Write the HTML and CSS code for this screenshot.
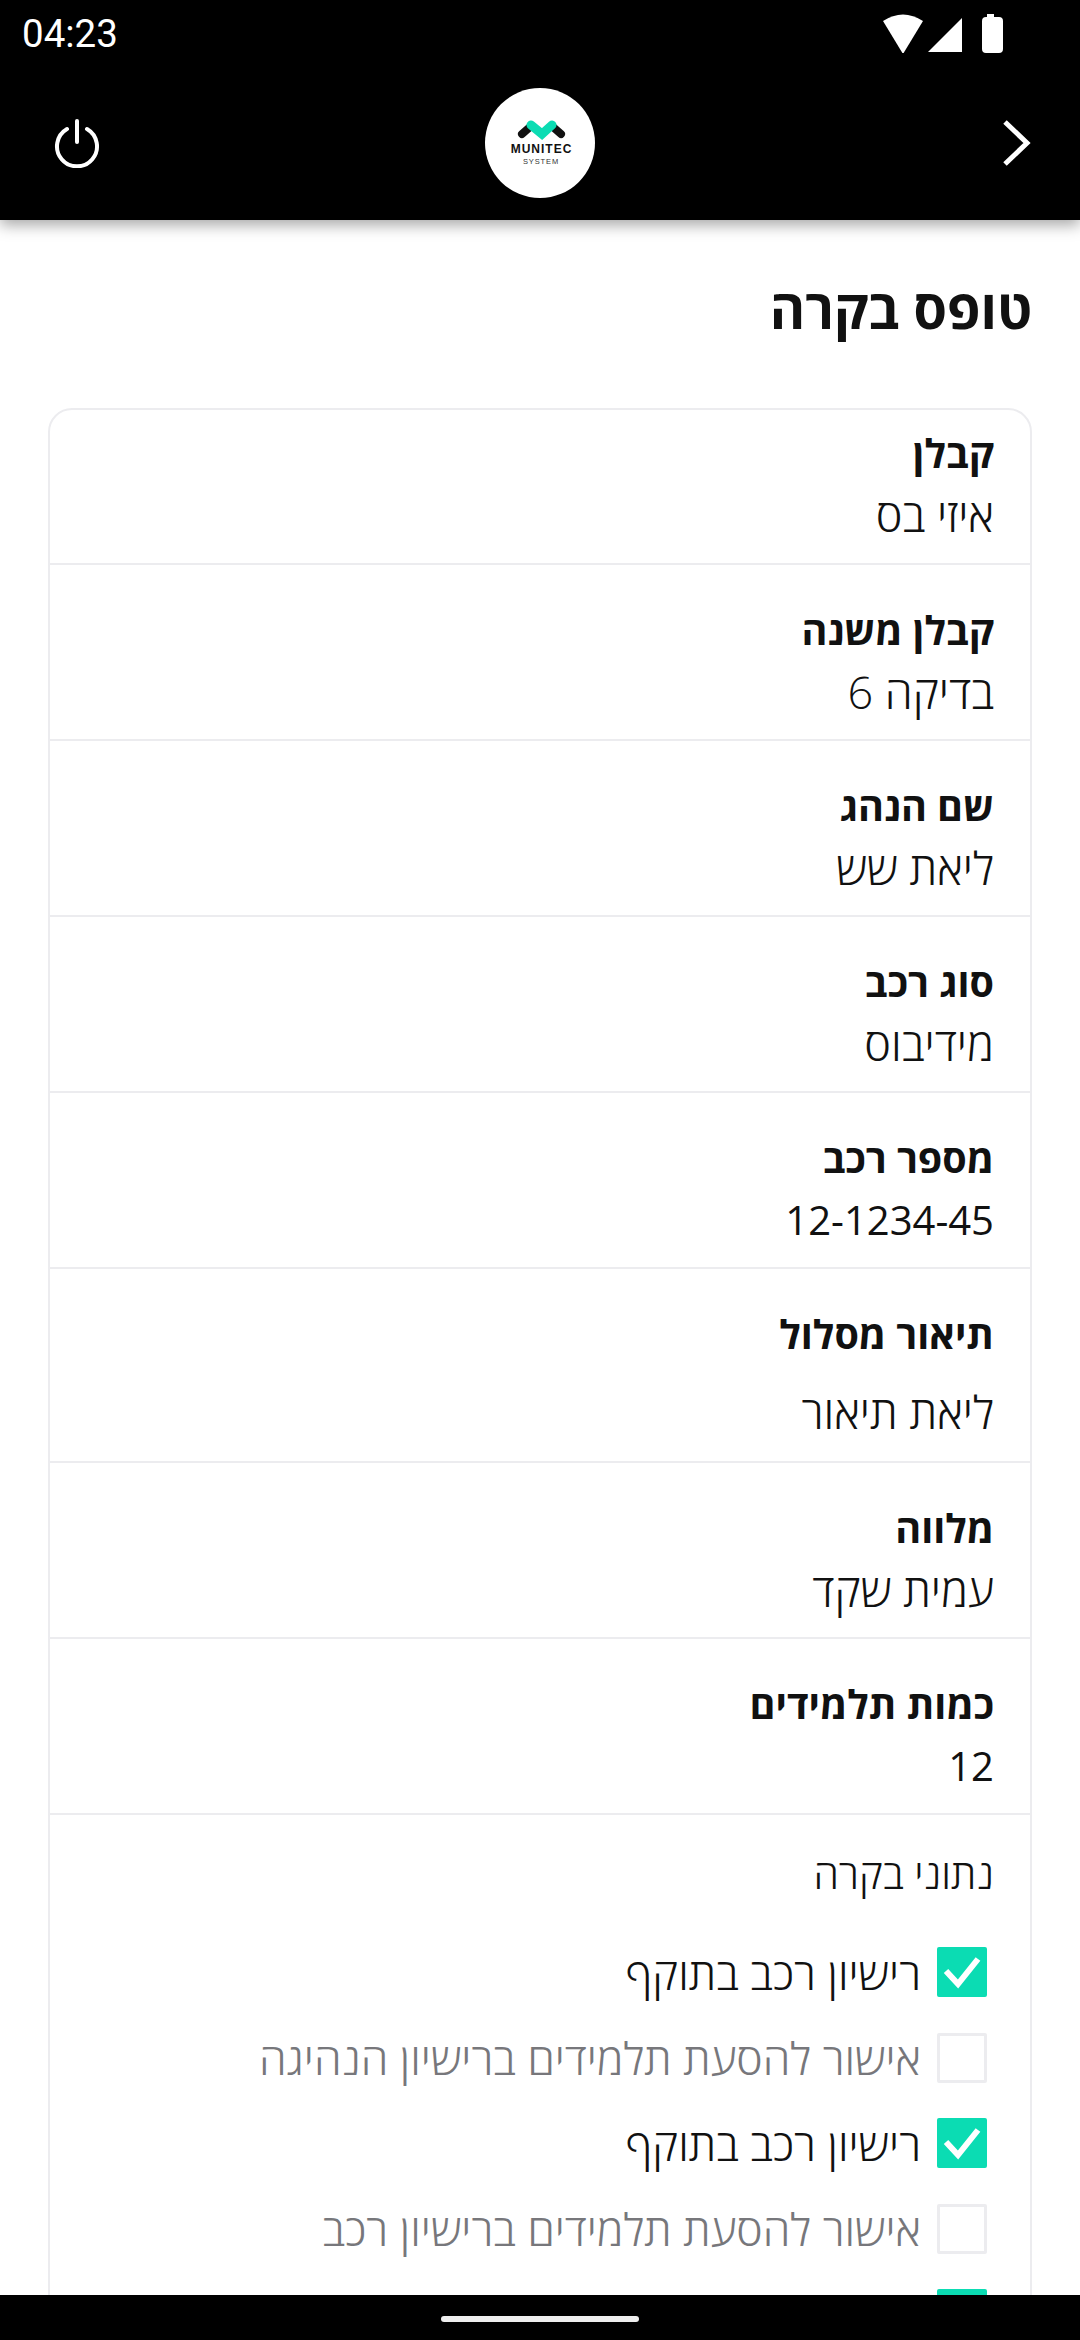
FILE: index.html
```html
<!DOCTYPE html>
<html lang="he" dir="rtl">
<head>
  <meta charset="UTF-8" />
  <meta name="viewport" content="width=device-width, initial-scale=1.0" />
  <title>טופס בקרה</title>
  <link rel="stylesheet" href="styles.css">
</head>
<body>
  <header class="top">
    <div class="status" dir="ltr">
      <span class="time">04:23</span>
      <svg class="status-icons" width="125" height="40" viewBox="0 0 125 40">
        <path d="M5 8 Q25 -5 45 8 L25 41 Z" fill="#fff"/>
        <path d="M50 39 L84 5 V39 Z" fill="#fff"/>
        <path d="M109 4 V1 H116 V4 H121 Q125 4 125 8 V36 Q125 40 121 40 H108 Q104 40 104 36 V8 Q104 4 108 4 Z" fill="#fff"/>
      </svg>
    </div>
    <div class="toolbar" dir="ltr">
      <div class="side side-start">
        <svg width="50" height="50" viewBox="0 0 50 50" fill="none" stroke="#fff" stroke-width="4" stroke-linecap="round">
          <path d="M15 11 A20 20 0 1 0 35 11"/>
          <path d="M25 3 V24"/>
        </svg>
      </div>
      <svg class="logo" width="110" height="110" viewBox="0 0 110 110">
        <circle cx="55" cy="55" r="55" fill="#fff"/>
        <path d="M37 46 L45 39" stroke="#111" stroke-width="8" stroke-linecap="round"/>
        <path d="M76 46 L68 39" stroke="#111" stroke-width="8" stroke-linecap="round"/>
        <path d="M46 37 L57 46 L67 37" fill="none" stroke="#0bdcb3" stroke-width="9" stroke-linecap="round" stroke-linejoin="miter"/>
        <text class="logo-name" x="56.5" y="65" text-anchor="middle">MUNITEC</text>
        <text class="logo-sub" x="56" y="76" text-anchor="middle">SYSTEM</text>
      </svg>
      <div class="side side-end">
        <svg width="30" height="48" viewBox="0 0 30 48" fill="none" stroke="#fff" stroke-width="5">
          <path d="M3 3 L25 24 L3 45" stroke-linejoin="miter"/>
        </svg>
      </div>
    </div>
  </header>

  <main class="content">
    <h1>טופס בקרה</h1>
    <section class="card">
      <div class="row">
        <div class="label">קבלן</div>
        <div class="value">איזי בס</div>
      </div>
      <div class="row">
        <div class="label">קבלן משנה</div>
        <div class="value">בדיקה 6</div>
      </div>
      <div class="row">
        <div class="label">שם הנהג</div>
        <div class="value">ליאת שש</div>
      </div>
      <div class="row">
        <div class="label">סוג רכב</div>
        <div class="value">מידיבוס</div>
      </div>
      <div class="row">
        <div class="label">מספר רכב</div>
        <div class="value value-num">12-1234-45</div>
      </div>
      <div class="row row-tall">
        <div class="label">תיאור מסלול</div>
        <div class="value">ליאת תיאור</div>
      </div>
      <div class="row">
        <div class="label">מלווה</div>
        <div class="value">עמית שקד</div>
      </div>
      <div class="row">
        <div class="label">כמות תלמידים</div>
        <div class="value value-num">12</div>
      </div>
      <div class="checks">
        <div class="checks-title">נתוני בקרה</div>
        <div class="check on">
          <span class="box"><svg width="38" height="34" viewBox="0 0 38 34" fill="none" stroke="#fff" stroke-width="6"><path d="M3 16 L15 29 L35 4"/></svg></span>
          <span>רישיון רכב בתוקף</span>
        </div>
        <div class="check">
          <span class="box"></span>
          <span>אישור להסעת תלמידים ברישיון הנהיגה</span>
        </div>
        <div class="check on">
          <span class="box"><svg width="38" height="34" viewBox="0 0 38 34" fill="none" stroke="#fff" stroke-width="6"><path d="M3 16 L15 29 L35 4"/></svg></span>
          <span>רישיון רכב בתוקף</span>
        </div>
        <div class="check">
          <span class="box"></span>
          <span>אישור להסעת תלמידים ברישיון רכב</span>
        </div>
        <div class="check on">
          <span class="box"></span>
          <span></span>
        </div>
      </div>
    </section>
  </main>

  <footer class="navbar"><span class="handle"></span></footer>
</body>
</html>
```

FILE: styles.css
```css
* { box-sizing: border-box; }

html, body {
  margin: 0;
  height: 2340px;
  overflow: hidden;
}

body {
  display: flex;
  flex-direction: column;
  background: #fff;
  color: #111;
  font-family: "Open Sans", "Liberation Sans", sans-serif;
}

.top {
  height: 220px;
  flex: none;
  background: #000;
  box-shadow: 0 5px 14px rgba(0, 0, 0, 0.35);
  position: relative;
  z-index: 1;
}

.status {
  height: 66px;
  padding: 0 77px 0 22px;
  display: flex;
  align-items: center;
  justify-content: space-between;
}

.time {
  color: #fff;
  font-family: Roboto, sans-serif;
  font-size: 38.5px;
}

.status-icons { margin-top: -1px; }

.toolbar {
  height: 154px;
  padding: 0 48px;
  display: flex;
  align-items: center;
}

.side {
  flex: 1;
  display: flex;
}

.side-start svg { margin-left: 4px; }
.side-end { justify-content: flex-end; }

.logo-name {
  font-family: "Liberation Sans", sans-serif;
  font-size: 12px;
  font-weight: 700;
  letter-spacing: 1px;
  fill: #111;
}

.logo-sub {
  font-family: "Liberation Sans", sans-serif;
  font-size: 7.5px;
  letter-spacing: 0.9px;
  fill: #333;
}

.content {
  flex: 1;
  min-height: 0;
  overflow: hidden;
  padding: 0 48px;
}

h1 {
  margin: 59px 0 71px;
  font-size: 54px;
  line-height: 58px;
  font-weight: 700;
}

.card {
  border: 2px solid #ececef;
  border-radius: 24px;
}

.row {
  height: 176px;
  padding: 34px 36px 0;
  border-bottom: 2px solid #ececef;
}

.row:first-child {
  height: 155px;
  padding-top: 12px;
}

.row-tall { height: 194px; }
.row-tall .value { margin-top: 16px; }

.label {
  font-size: 39.5px;
  line-height: 62px;
  font-weight: 700;
}

.value {
  font-size: 45px;
  line-height: 62px;
  font-weight: 300;
}

.value-num {
  font-size: 40px;
  font-weight: 400;
}

.checks { padding: 30px 36px 0 40px; }

.checks-title {
  font-size: 41px;
  line-height: 56px;
  margin-bottom: 46px;
  font-weight: 300;
}

.check {
  display: flex;
  align-items: center;
  gap: 16px;
  height: 50px;
  margin-bottom: 35.5px;
  padding-right: 7px;
  font-size: 44.5px;
  font-weight: 300;
  color: #77777b;
}

.check.on { color: #111; }

.box {
  width: 50px;
  height: 50px;
  flex: none;
  border: 3px solid #ececef;
  border-radius: 2px;
  display: flex;
  align-items: center;
  justify-content: center;
}

.check.on .box {
  background: #0bdcb3;
  border-color: #0bdcb3;
}

.navbar {
  height: 45px;
  flex: none;
  background: #000;
  display: flex;
  justify-content: center;
  padding-top: 21px;
  position: relative;
  z-index: 1;
}

.handle {
  width: 198px;
  height: 6px;
  border-radius: 3px;
  background: #eee;
}
```
